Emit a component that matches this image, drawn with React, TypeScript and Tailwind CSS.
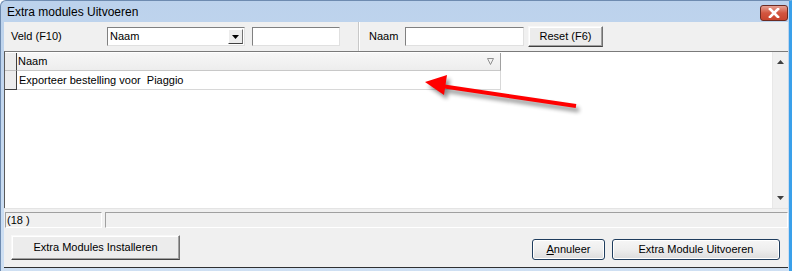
import React from "react";

const font = { fontFamily: '"Liberation Sans", Arial, sans-serif' };

function ClassicButton({ children, className }: { children: React.ReactNode; className: string }) {
  return (
    <div
      className={
        "flex items-center justify-center bg-[#ececec] border border-t-[#f8f8f8] border-l-[#f8f8f8] border-r-[#707070] border-b-[#404040] shadow-[inset_-1px_-1px_0_#a0a0a0,inset_1px_1px_0_#ffffff] text-[11px] text-black shrink-0 " +
        className
      }
    >
      {children}
    </div>
  );
}

function VistaButton({ children, className }: { children: React.ReactNode; className: string }) {
  return (
    <div
      className={
        "flex items-center justify-center rounded-[3px] border border-[#1f3d5e] bg-gradient-to-b from-[#f6f6f6] via-[#eeeeee] to-[#dcdcdc] shadow-[inset_0_0_0_1px_#ffffff] text-[11px] text-black shrink-0 " +
        className
      }
    >
      {children}
    </div>
  );
}

function Field({ className }: { className: string }) {
  return (
    <div
      className={
        "h-[19px] border border-t-[#808080] border-l-[#808080] border-r-[#e0e0e0] border-b-[#e0e0e0] bg-white shrink-0 " +
        className
      }
    />
  );
}

export default function App() {
  return (
    <div
      style={font}
      className="relative w-[792px] h-[271px] overflow-hidden bg-gradient-to-b from-[#bcd2ec] to-[#cfe0f3] flex flex-col rounded-tl-[6px] border-l border-t border-[#6e8bb0] border-r-[3px] border-r-[#3aa0ea]"
    >
      {/* title bar */}
      <div className="h-[21px] flex items-center justify-between pl-[6px] pr-[1px] shrink-0">
        <span className="text-[12px] text-black leading-none">Extra modules Uitvoeren</span>
        <div className="w-[28px] h-[16px] mt-[2px] rounded-[3px] border border-[#6b2b22] bg-gradient-to-b from-[#e5a193] via-[#d2553f] to-[#c9452e] flex items-center justify-center">
          <svg width="12" height="10" viewBox="0 0 12 10">
            <path d="M2 1 L10 9 M10 1 L2 9" stroke="#ffffff" strokeWidth="2.6" strokeLinecap="square" />
          </svg>
        </div>
      </div>

      {/* client area */}
      <div className="flex-1 ml-[3px] mr-[1px] bg-[#f0f0f0] flex flex-col">
        {/* toolbar */}
        <div className="h-[29px] flex items-center text-[11px] text-black shrink-0">
          <span className="ml-[7px] w-[96px]">Veld (F10)</span>
          <div className="w-[138px] h-[19px] border border-t-[#808080] border-l-[#808080] border-r-[#e0e0e0] border-b-[#e0e0e0] bg-white flex items-center">
            <span className="flex-1 pl-[2px]">Naam</span>
            <div className="w-[15px] h-[15px] mr-[1px] bg-[#ececec] border border-t-[#ffffff] border-l-[#ffffff] border-r-[#707070] border-b-[#404040] flex items-center justify-center">
              <svg width="7" height="4" viewBox="0 0 7 4">
                <path d="M0 0 H7 L3.5 4 Z" fill="#000" />
              </svg>
            </div>
          </div>
          <Field className="ml-[7px] w-[88px]" />
          <div className="ml-[18px] h-[29px] w-[2px] border-l border-[#c8c8c8] border-r border-r-white" />
          <span className="ml-[9px] w-[36px]">Naam</span>
          <Field className="w-[119px]" />
          <ClassicButton className="ml-[4px] w-[75px] h-[21px]">Reset (F6)</ClassicButton>
        </div>

        {/* grid */}
        <div className="h-[157px] flex border-t border-[#7a7a7a] border-l border-l-[#5a5a5a] shrink-0">
          <div className="flex-1 bg-white flex flex-col">
            <div className="flex h-[18px] mt-[1px]">
              <div className="w-[12px] bg-[#ececec] border-r border-[#404040] border-b border-b-[#c0c0c0]" />
              <div className="w-[484px] bg-gradient-to-b from-[#f7f7f7] to-[#ededed] border-b border-[#c8c8c8] border-r border-r-[#a0a0a0] flex items-center justify-between text-[11px] pl-[1px] pr-[6px]">
                <span>Naam</span>
                <svg width="7" height="7" viewBox="0 0 7 7">
                  <path d="M0.5 0.5 H6.5 L3.5 6.5 Z" fill="none" stroke="#909090" strokeWidth="1" />
                </svg>
              </div>
            </div>
            <div className="flex h-[19px]">
              <div className="w-[12px] bg-[#ececec] border-r border-[#404040] border-b border-b-[#404040]" />
              <div className="w-[484px] border-b border-[#d8d8d8] border-r border-r-[#d8d8d8] flex items-center text-[11px] pl-[2px] whitespace-pre">
                Exporteer bestelling voor  Piaggio
              </div>
            </div>
          </div>
          <div className="w-[16px] bg-[#f0f0f0] flex flex-col items-center justify-between py-[8px] border-l border-[#e8e8e8]">
            <svg width="7" height="4" viewBox="0 0 7 4">
              <path d="M0 4 H7 L3.5 0 Z" fill="#404040" />
            </svg>
            <svg width="7" height="4" viewBox="0 0 7 4">
              <path d="M0 0 H7 L3.5 4 Z" fill="#404040" />
            </svg>
          </div>
        </div>

        {/* status bar */}
        <div className="h-[20px] flex items-start pt-[3px] gap-[3px] pl-[1px] text-[11px] border-t border-[#e4e4e4] shrink-0">
          <div className="w-[97px] h-[16px] border border-t-[#a0a0a0] border-l-[#a0a0a0] border-r-[#ffffff] border-b-[#ffffff] flex items-center pl-[1px] leading-none">
            (18 )
          </div>
          <div className="flex-1 h-[16px] border border-t-[#a0a0a0] border-l-[#a0a0a0] border-r-[#ffffff] border-b-[#ffffff]" />
        </div>

        {/* buttons */}
        <div className="flex-1 flex items-start pl-[7px] pr-[8px]">
          <ClassicButton className="mt-[7px] w-[169px] h-[25px]">Extra Modules Installeren</ClassicButton>
          <div className="flex-1" />
          <div className="mt-[11px] flex gap-[7px]">
            <VistaButton className="w-[73px] h-[21px]">
              <span>
                <span className="underline">A</span>nnuleer
              </span>
            </VistaButton>
            <VistaButton className="w-[168px] h-[21px]">Extra Module Uitvoeren</VistaButton>
          </div>
        </div>
        <div className="h-[1px] bg-[#303030] shrink-0" />
      </div>
      <div className="h-[3px] shrink-0" />

      {/* red arrow annotation (overlay) */}
      <svg className="absolute left-0 top-0 pointer-events-none" width="792" height="271" viewBox="0 0 792 271">
        <defs>
          <filter id="sh" x="-20%" y="-50%" width="140%" height="200%">
            <feGaussianBlur stdDeviation="2" />
          </filter>
        </defs>
        <g transform="translate(3,4)" opacity="0.45" filter="url(#sh)">
          <line x1="575" y1="105" x2="440" y2="85" stroke="#000" strokeWidth="4" />
          <path d="M424 81 L446 74 L443 94 Z" fill="#000" />
        </g>
        <line x1="575" y1="105" x2="440" y2="85" stroke="#ff0000" strokeWidth="4" />
        <path d="M424 81 L446 74 L443 94 Z" fill="#ff0000" />
      </svg>
    </div>
  );
}
